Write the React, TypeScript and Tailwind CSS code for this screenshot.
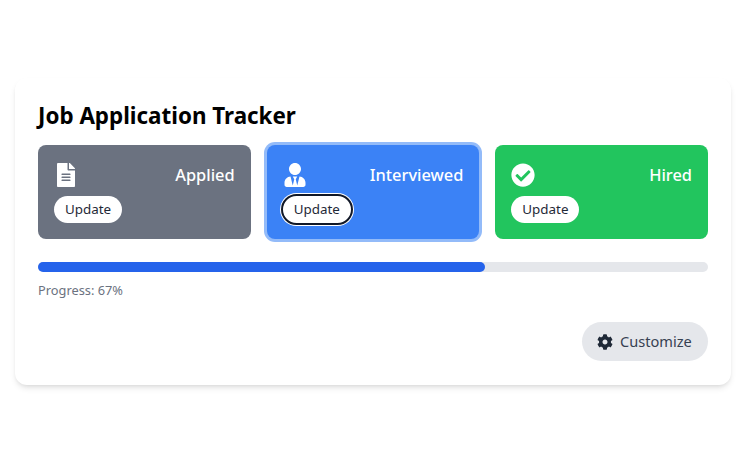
import { FaCheckCircle, FaCog, FaFileAlt, FaUserTie } from 'react-icons/fa';

const stages = [
  { label: 'Applied', icon: FaFileAlt, bg: 'bg-[#6b7280]', active: false },
  { label: 'Interviewed', icon: FaUserTie, bg: 'bg-[#3b82f6]', active: true },
  { label: 'Hired', icon: FaCheckCircle, bg: 'bg-[#22c55e]', active: false },
];

export default function App() {
  return (
    <div className="min-h-screen bg-white pl-[15px] pt-[78px] font-['Noto_Sans',sans-serif]">
      <div className="w-[716px] h-[307px] bg-white rounded-xl shadow-[0_4px_6px_-1px_rgba(0,0,0,0.1),0_2px_4px_-2px_rgba(0,0,0,0.1)] px-[23px] pt-[23px]">
        <h1 className="text-[22.4px] leading-[30px] font-bold text-black mb-[14px]">Job Application Tracker</h1>
        <div className="grid grid-cols-3 gap-4">
          {stages.map((s) => {
            const Icon = s.icon;
            return (
              <div
                key={s.label}
                className={`${s.bg} h-[94px] rounded-lg px-4 pt-[14px] text-white ${s.active ? 'ring-[3px] ring-[#93bbf9]' : ''}`}
              >
                <div className="flex items-center justify-between h-[32px] mb-[5px]">
                  <Icon className="text-[24px]" />
                  <span className="text-[16.4px] font-medium">{s.label}</span>
                </div>
                <button
                  className={`bg-white text-[#1f2937] text-[13.4px] rounded-full pl-[11px] h-[27px] w-[68px] text-left ${s.active ? 'outline-2 outline-offset-0 outline-[#111827] ring-[3px] ring-white' : ''}`}
                >
                  Update
                </button>
              </div>
            );
          })}
        </div>
        <div className="mt-[23px] h-2.5 rounded-full bg-[#e5e7eb]">
          <div className="h-full w-2/3 rounded-full bg-[#2563eb]" />
        </div>
        <p className="mt-[8px] text-[12.8px] leading-5 text-[#6b7280]">Progress: 67%</p>
        <div className="flex justify-end mt-[22px]">
          <button className="h-[39px] w-[126px] rounded-full bg-[#e5e7eb] pl-[15px] flex items-center gap-[7px] text-[14.6px] text-[#374151]">
            <FaCog className="text-[16px] text-[#1f2937]" />
            Customize
          </button>
        </div>
      </div>
    </div>
  );
}
